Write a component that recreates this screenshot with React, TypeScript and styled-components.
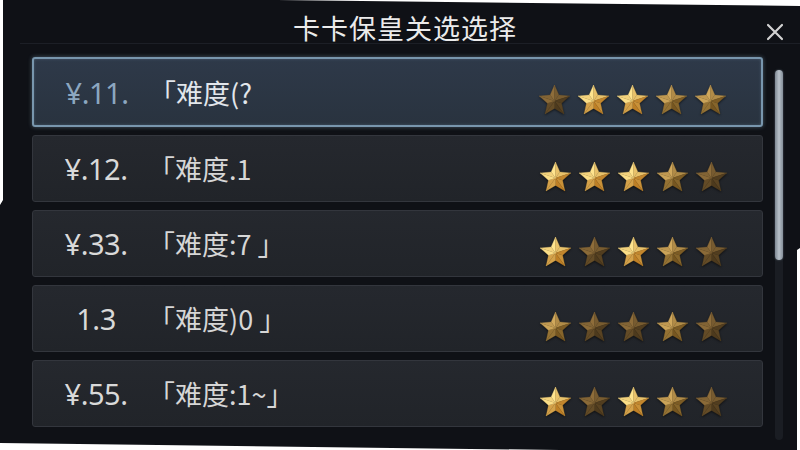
import React from "react";
import styled, { createGlobalStyle } from "styled-components";

const GlobalStyle = createGlobalStyle`
  html, body {
    margin: 0;
    padding: 0;
    background: #ffffff;
  }
  * {
    box-sizing: border-box;
  }
`;

const Frame = styled.div`
  width: 800px;
  height: 450px;
  background: #0f1116;
  display: flex;
  flex-direction: column;
  font-family: "Noto Sans", "Noto Sans CJK SC", sans-serif;
  overflow: hidden;
  /* torn screenshot edges */
  clip-path: polygon(3px 0, 277px 0, 800px 6px, 800px 248px, 797px 250px, 797px 450px, 560px 450px, 0 443px, 0 205px, 3px 200px);
`;

const Header = styled.div`
  height: 44px;
  flex-shrink: 0;
  display: flex;
  align-items: flex-start;
  justify-content: center;
  position: relative;
  border-bottom: 1px solid #1c1f26;
  margin: 0 0 0 20px;
`;

const Title = styled.div`
  font-family: "Noto Sans CJK SC", sans-serif;
  font-size: 27px;
  line-height: 30px;
  padding-top: 13px;
  padding-right: 10px;
  color: #ebebeb;
  letter-spacing: 1px;
`;

const CloseButton = styled.div`
  position: absolute;
  right: 16px;
  top: 23px;
  width: 18px;
  height: 18px;
`;

const Body = styled.div`
  flex: 1;
  display: flex;
  padding: 13px 0 0 32px;
  gap: 12px;
`;

const List = styled.div`
  width: 731px;
  display: flex;
  flex-direction: column;
  gap: 8px;
`;

const Row = styled.div<{ $active?: boolean }>`
  height: ${(p) => (p.$active ? 70 : 67)}px;
  display: flex;
  align-items: center;
  padding: 0 34px 0 21px;
  border-radius: 3px;
  background: ${(p) =>
    p.$active
      ? "linear-gradient(180deg, #2e3949 0%, #29333f 100%)"
      : "linear-gradient(180deg, #25282e 0%, #212429 100%)"};
  border: ${(p) => (p.$active ? "2px solid #7896ad" : "1px solid #33363d")};
  box-shadow: ${(p) =>
    p.$active ? "0 0 4px rgba(140, 175, 200, 0.45), inset 0 0 3px rgba(140,175,200,0.3)" : "none"};
`;

const Price = styled.div<{ $active?: boolean }>`
  width: 84px;
  text-align: center;
  font-size: 29px;
  letter-spacing: -0.5px;
  color: ${(p) => (p.$active ? "#8ca7c0" : "#d9d9d9")};
`;

const Level = styled.div<{ $active?: boolean }>`
  margin-left: 10px;
  font-family: "Noto Sans CJK SC", sans-serif;
  font-size: 27px;
  color: ${(p) => (p.$active ? "#e2e6eb" : "#d6d6d6")};
  flex: 1;
  white-space: nowrap;
`;

const Stars = styled.div`
  display: flex;
  gap: 6px;
  margin-top: 16px;
`;

const Scroll = styled.div`
  width: 8px;
  margin-top: 13px;
  height: 370px;
  border-radius: 4px;
  background: #1a1d23;
  display: flex;
  flex-direction: column;
`;

const Thumb = styled.div`
  height: 190px;
  border-radius: 4px;
  background: linear-gradient(90deg, #7e8893 0%, #b7c0c9 50%, #858f99 100%);
  box-shadow: 0 0 2px rgba(160, 180, 200, 0.5);
`;

type Shade = [string, string];

// dull, medium and bright gold
const palettes: Shade[] = [
  ["#8e6d3a", "#4d3a1d"],
  ["#d0a85c", "#765620"],
  ["#ffe48e", "#bd7f26"],
];

const mix = (a: string, b: string, t: number) => {
  const pa = [1, 3, 5].map((i) => parseInt(a.slice(i, i + 2), 16));
  const pb = [1, 3, 5].map((i) => parseInt(b.slice(i, i + 2), 16));
  return (
    "#" +
    pa
      .map((v, i) => Math.round(v * t + pb[i] * (1 - t)).toString(16).padStart(2, "0"))
      .join("")
  );
};

const Star = ({ level }: { level: number }) => {
  const R = 16;
  const r = 7.4;
  const light = (-125 * Math.PI) / 180;
  const [hi, lo] = palettes[level];
  const pt = (deg: number, rad: number) => {
    const a = (deg * Math.PI) / 180;
    return [Math.cos(a) * rad, Math.sin(a) * rad];
  };
  const faces: React.ReactNode[] = [];
  for (let k = 0; k < 5; k++) {
    const outerDeg = -90 + 72 * k;
    const o = pt(outerDeg, R);
    [-36, 36].forEach((off, j) => {
      const inn = pt(outerDeg + off, r);
      const mid = ((outerDeg + off / 2) * Math.PI) / 180;
      const t = Math.max(0, Math.min(1, 0.5 + 0.5 * Math.cos(mid - light) + (j === 0 ? 0.15 : -0.15)));
      faces.push(
        <polygon
          key={`${k}-${j}`}
          points={`0,0 ${o[0].toFixed(2)},${o[1].toFixed(2)} ${inn[0].toFixed(2)},${inn[1].toFixed(2)}`}
          fill={mix(hi, lo, t)}
          stroke={mix(hi, lo, t)}
          strokeWidth={0.3}
        />
      );
    });
  }
  return (
    <svg width="33" height="32" viewBox="-16.5 -17 33 32" style={{ filter: "drop-shadow(0 1px 1px rgba(0,0,0,0.6))" }}>
      {faces}
    </svg>
  );
};

const Close = () => (
  <svg width="18" height="18" viewBox="0 0 18 18">
    <path d="M2 2 L16 16 M16 2 L2 16" stroke="#d2d2d2" strokeWidth="2.2" strokeLinecap="round" />
  </svg>
);

type Stage = { price: string; level: string; stars: number[]; active?: boolean };

const stages: Stage[] = [
  { price: "¥.11.", level: "「难度(?", stars: [0, 2, 2, 1, 1], active: true },
  { price: "¥.12.", level: "「难度.1", stars: [2, 2, 2, 1, 0] },
  { price: "¥.33.", level: "「难度:7 」", stars: [2, 0, 2, 1, 0] },
  { price: "1.3", level: "「难度)0 」", stars: [1, 0, 0, 1, 0] },
  { price: "¥.55.", level: "「难度:1~」", stars: [2, 0, 2, 1, 0] },
];

export default function App() {
  return (
    <>
      <GlobalStyle />
      <Frame>
        <Header>
          <Title>卡卡保皇关选选择</Title>
          <CloseButton>
            <Close />
          </CloseButton>
        </Header>
        <Body>
          <List>
            {stages.map((s) => (
              <Row key={s.price} $active={s.active}>
                <Price $active={s.active}>{s.price}</Price>
                <Level $active={s.active}>{s.level}</Level>
                <Stars>
                  {s.stars.map((lv, i) => (
                    <Star key={i} level={lv} />
                  ))}
                </Stars>
              </Row>
            ))}
          </List>
          <Scroll>
            <Thumb />
          </Scroll>
        </Body>
      </Frame>
    </>
  );
}
